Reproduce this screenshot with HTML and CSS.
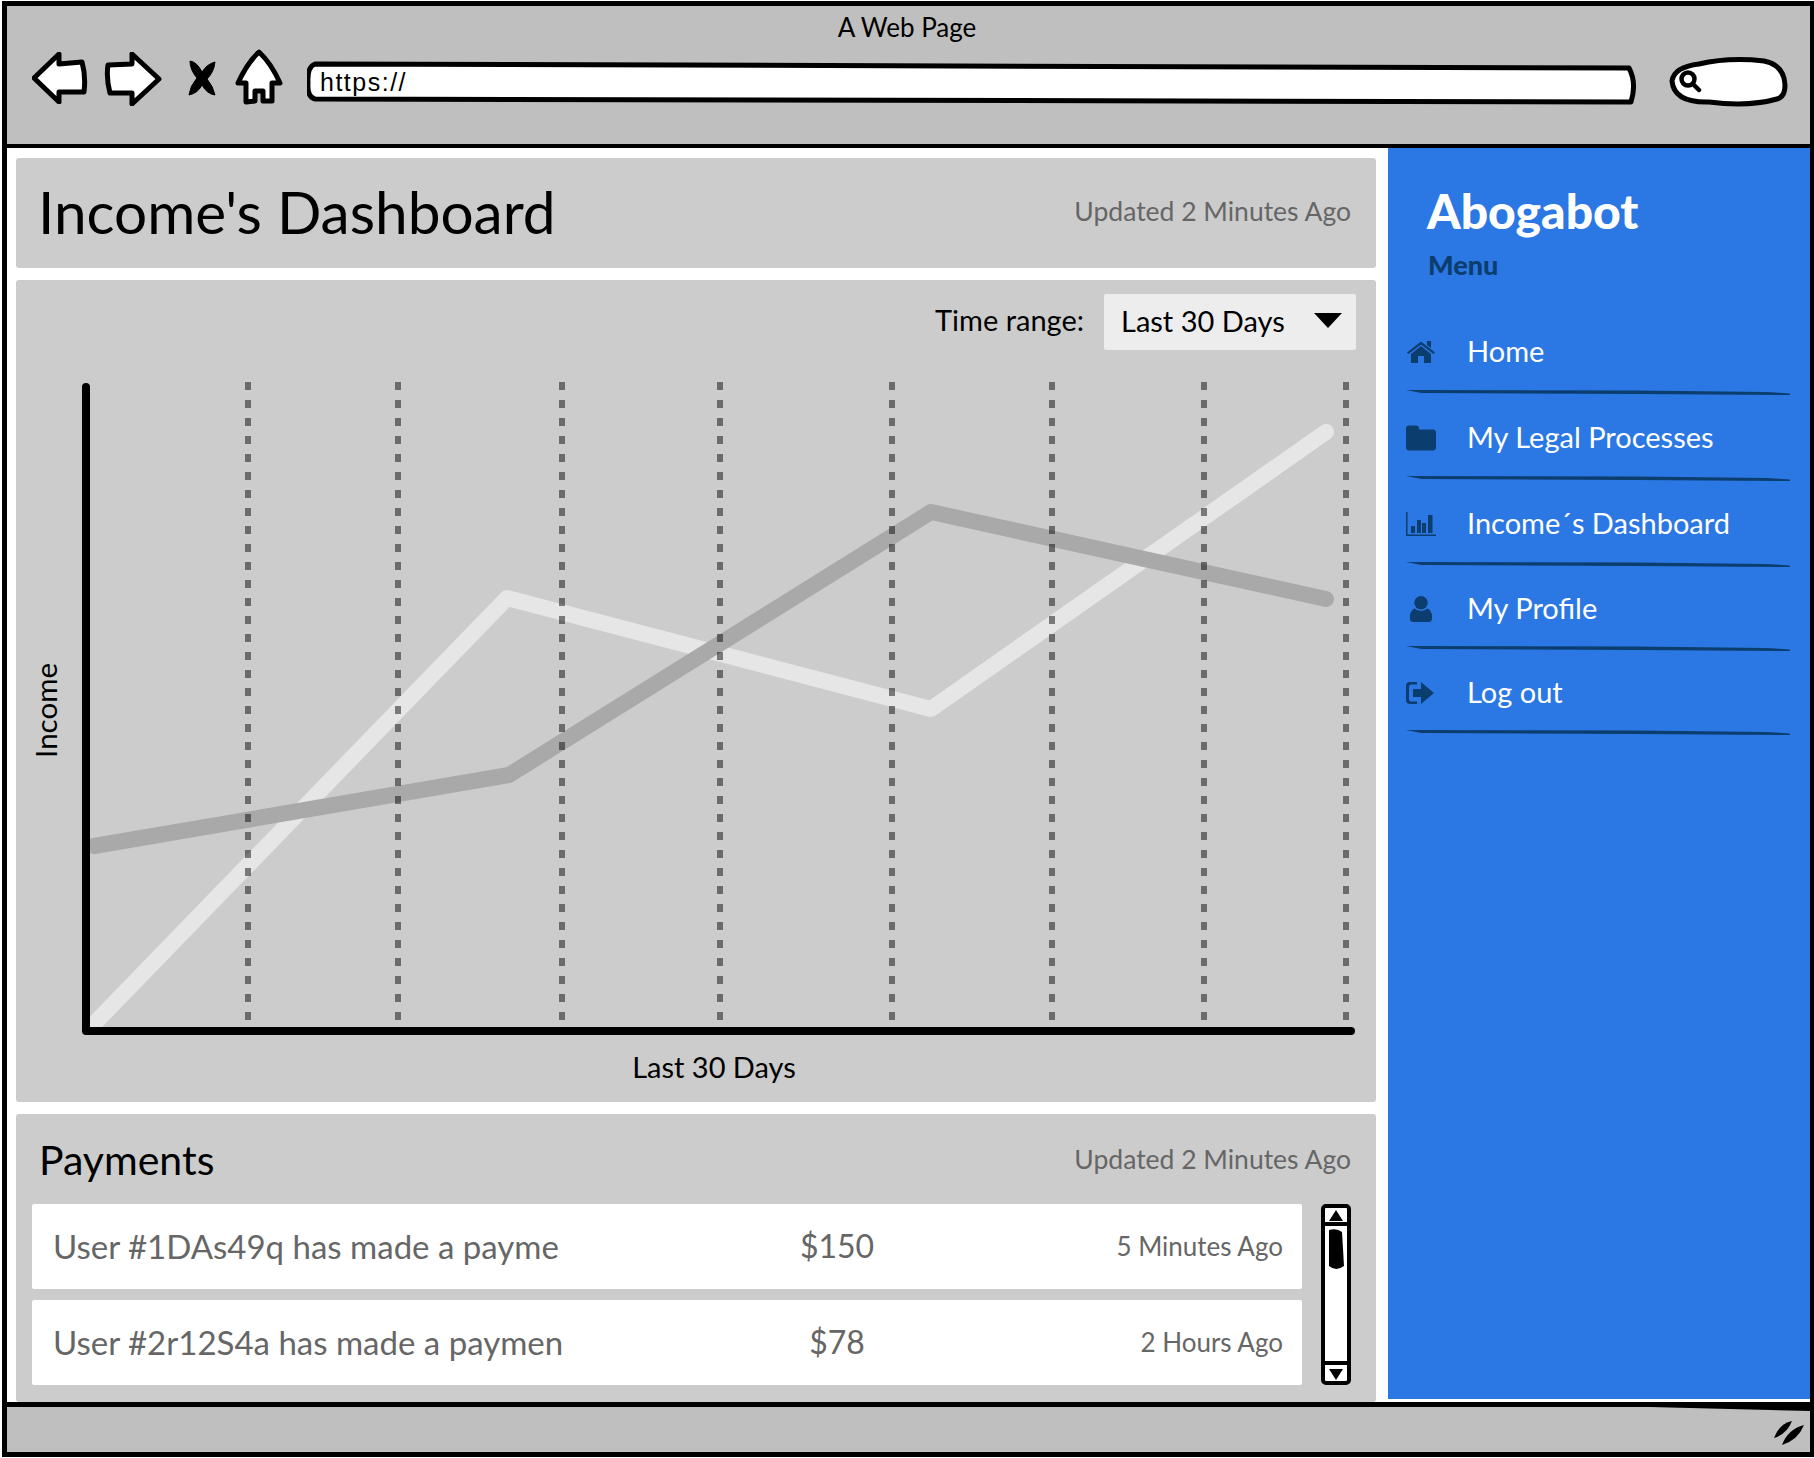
FILE: index.html
```html
<!DOCTYPE html>
<html lang="en">
<head>
  <meta charset="UTF-8" />
  <title>A Web Page</title>
  <link rel="stylesheet" href="styles.css">
</head>
<body>

<div class="window">

  <!-- Browser toolbar -->
  <header class="toolbar">
    <div class="window-title">A Web Page</div>
    <div class="controls">
      <svg class="ctl-back" viewBox="0 0 56 52"><path d="M2 26 L27 2 L27 12 L50 10 Q54 24 52 40 L27 40 L27 50 Z" /></svg>
      <svg class="ctl-forward" viewBox="0 0 58 54"><path d="M4 13 L28 12 L28 2 L55 27 L28 52 L28 41 L6 41 Q2 26 4 13 Z" /></svg>
      <svg class="ctl-stop" viewBox="0 0 28 36"><path d="M2 1 Q9 2 14 12 Q19 4 27 2 Q26 12 19 19 Q25 26 27 35 Q19 34 14 25 Q10 33 1 35 Q2 26 9 18 Q2 10 2 1 Z" /></svg>
      <svg class="ctl-home" viewBox="0 0 48 56"><path d="M24 3 Q36 14 45 34 L37 34 L37 52 L28 52 L28 42 L20 42 L20 52 L11 53 L11 34 L3 34 Q12 14 24 3 Z" /></svg>
      <div class="url-bar">
        <svg class="box-outline" viewBox="0 0 1331 44"><path d="M8 3 L1322 7 Q1330 22 1324 41 L8 38 Q0 36 1 22 Q0 6 8 3 Z" /></svg>
        <span class="url-text">https://</span>
      </div>
      <div class="search-box">
        <svg class="box-outline" viewBox="0 0 120 50"><path d="M30 7 Q60 0 95 4 Q115 8 116 28 Q116 40 108 42 Q80 50 40 45 Q5 46 3 24 Q5 10 30 7 Z" /></svg>
        <svg class="search-icon" viewBox="0 0 24 24"><circle cx="10" cy="10" r="6.5" /><path d="M15 15 L21 21" /></svg>
      </div>
    </div>
  </header>

  <div class="content">
    <main class="main">

      <section class="panel title-panel">
        <h1>Income's Dashboard</h1>
        <span class="updated">Updated 2 Minutes Ago</span>
      </section>

      <!-- Chart -->
      <section class="panel chart-panel">
        <div class="range-row">
          <label>Time range:</label>
          <div class="select">Last 30 Days <span class="caret"></span></div>
        </div>
        <div class="chart">
          <div class="y-label">Income</div>
          <svg class="plot" viewBox="76 376 1284 664">
            <polyline class="series-light" points="92,1026 507,598 931,709 1326,432" />
            <polyline class="series-dark" points="94,846 509,775 931,512 1326,599" />
            <g class="grid-lines">
              <path d="M248 382V1030" />
              <path d="M398 382V1030" />
              <path d="M562 382V1030" />
              <path d="M720 382V1030" />
              <path d="M892 382V1030" />
              <path d="M1052 382V1030" />
              <path d="M1204 382V1030" />
              <path d="M1346 382V1030" />
            </g>
            <path class="axes" d="M86 387 V1031 H1351" />
          </svg>
        </div>
        <div class="x-label">Last 30 Days</div>
      </section>

      <!-- Payments -->
      <section class="panel payments-panel">
        <div class="payments-head">
          <h2>Payments</h2>
          <span class="updated">Updated 2 Minutes Ago</span>
        </div>
        <div class="payments-body">
          <ul class="rows">
            <li class="row">
              <span class="row-text">User #1DAs49q has made a payme</span>
              <span class="row-amount">$150</span>
              <span class="row-time">5 Minutes Ago</span>
            </li>
            <li class="row">
              <span class="row-text">User #2r12S4a has made a paymen</span>
              <span class="row-amount">$78</span>
              <span class="row-time">2 Hours Ago</span>
            </li>
          </ul>
          <svg class="scrollbar" viewBox="0 0 30 181">
            <rect class="sb-frame" x="2" y="2" width="26" height="177" rx="3" />
            <path class="sb-line" d="M2 20H28M2 159H28" />
            <path class="sb-fill" d="M15 6 L22 17 L8 17 Z" />
            <path class="sb-fill" d="M8 165 L22 165 L15 176 Z" />
            <path class="sb-fill" d="M8 26 Q16 24 21 28 L23 62 Q15 68 8 62 Z" />
          </svg>
        </div>
      </section>

    </main>

    <!-- Sidebar -->
    <aside class="sidebar">
      <div class="brand">Abogabot</div>
      <div class="menu-label">Menu</div>
      <ul class="nav">
        <li class="nav-item">
          <svg class="nav-icon" viewBox="0 0 30 24"><path d="M5 14 L15 6 L25 14 V23 H18 V16 H12 V23 H5 Z" /><path d="M1 12.5 L15 1.5 L29 12.5 L27.5 14 L15 4.5 L2.5 14 Z" /><path d="M21 1 H25 V8 L21 5 Z" /></svg>
          Home
        </li>
        <li class="nav-item">
          <svg class="nav-icon" viewBox="0 0 30 25"><path d="M3 0 H10 a3 3 0 0 1 3 3 V4 H27 a3 3 0 0 1 3 3 V22 a3 3 0 0 1 -3 3 H3 a3 3 0 0 1 -3 -3 V3 a3 3 0 0 1 3 -3 Z" /></svg>
          My Legal Processes
        </li>
        <li class="nav-item">
          <svg class="nav-icon" viewBox="0 0 30 24"><path d="M0 0 H1.5 V22.5 H30 V24 H0 Z" /><rect x="5" y="14" width="4" height="7" /><rect x="11" y="8" width="4" height="13" /><rect x="16" y="11" width="4" height="10" /><rect x="22" y="3" width="4.5" height="18" /></svg>
          Income´s Dashboard
        </li>
        <li class="nav-item short">
          <svg class="nav-icon" viewBox="0 0 30 27"><circle cx="15" cy="7" r="7" /><path d="M8 13 Q15 18 22 13 Q26 15 26.500 21 V24 Q26 27 23 27 H7 Q4 27 3.500 24 V21 Q4 15 8 13 Z" /></svg>
          My Profile
        </li>
        <li class="nav-item short">
          <svg class="nav-icon" viewBox="0 0 30 24"><path d="M4 1 H11 V3.500 H5 Q3 3.500 3 6 V18 Q3 20.500 5 20.500 H11 V23 H4 Q0 23 0 19 V5 Q0 1 4 1 Z" /><path d="M7 8 H15 V1 L28 12 L15 23 V16 H7 Z" /></svg>
          Log out
        </li>
      </ul>
    </aside>
  </div>

  <!-- Status bar -->
  <footer class="statusbar">
    <svg class="grip" viewBox="0 0 30 26"><path d="M0 18 Q5 4 18 1 Q13 14 0 18 Z" /><path d="M8 25 Q14 9 30 5 Q24 20 8 25 Z" /></svg>
  </footer>

</div>

</body>
</html>
```

FILE: styles.css
```css
* {
  box-sizing: border-box;
}

body {
  margin: 0;
  background: #fff;
  font-family: Lato, sans-serif;
  color: #000;
}

h1, h2, ul {
  margin: 0;
  padding: 0;
}

ul {
  list-style: none;
}

.window {
  width: 1812px;
  height: 1456px;
  margin: 1px 0 0 2px;
  border: 5px solid #000;
  border-right-width: 4px;
  display: flex;
  flex-direction: column;
}

/* toolbar */
.toolbar {
  height: 142px;
  flex-shrink: 0;
  background: #bfbfbf;
  border-bottom: 4px solid #000;
}

.window-title {
  padding-top: 5px;
  text-align: center;
  font-size: 26px;
  line-height: 32px;
  margin-right: 3px;
}

.controls {
  display: flex;
  align-items: flex-start;
  padding: 7px 0 0 25px;
}

.controls svg path {
  fill: #fff;
  stroke: #000;
  stroke-width: 5;
  stroke-linejoin: round;
}

.ctl-back {
  width: 56px;
  height: 52px;
  margin-top: 2px;
}

.ctl-forward {
  width: 58px;
  height: 54px;
  margin: 2px 0 0 16px;
}

.ctl-stop {
  width: 28px;
  height: 36px;
  margin: 10px 0 0 26px;
}

.controls .ctl-stop path {
  fill: #000;
  stroke-width: 1;
}

.ctl-home {
  width: 48px;
  height: 56px;
  margin: -1px 0 0 19px;
}

.url-bar {
  position: relative;
  width: 1331px;
  height: 44px;
  margin: 11px 0 0 24px;
  padding: 6px 0 0 13px;
  font-family: "Liberation Sans", sans-serif;
  font-size: 25px;
  line-height: 30px;
  letter-spacing: 1.500px;
}

.box-outline {
  position: absolute;
  left: 0;
  top: 0;
  width: 100%;
  height: 100%;
}

.url-text {
  position: relative;
}

.search-box {
  position: relative;
  width: 120px;
  height: 50px;
  margin: 7px 0 0 31px;
  padding: 12px 0 0 9px;
}

.search-icon {
  position: relative;
  display: block;
  width: 24px;
  height: 24px;
}

.controls .search-icon circle {
  fill: none;
  stroke: #000;
  stroke-width: 4.500;
}

.controls .search-icon path {
  stroke-width: 4.500;
  stroke-linecap: round;
}

/* content */
.content {
  flex: 1;
  min-height: 0;
  display: flex;
  gap: 12px;
  padding-left: 9px;
}

.main {
  width: 1360px;
  flex-shrink: 0;
  padding-top: 10px;
  display: flex;
  flex-direction: column;
  gap: 12px;
}

.panel {
  flex-shrink: 0;
  background: #cccccc;
  border-radius: 3px;
}

.title-panel {
  height: 110px;
  display: flex;
  align-items: center;
  justify-content: space-between;
  padding: 0 25px 5px 22px;
}

h1 {
  font-weight: 400;
  font-size: 58.500px;
}

.updated {
  font-size: 26.500px;
  color: #666;
}

/* chart */
.chart-panel {
  height: 822px;
  padding-top: 14px;
}

.range-row {
  display: flex;
  justify-content: flex-end;
  align-items: center;
  gap: 20px;
  height: 56px;
  padding-right: 20px;
}

.range-row label {
  font-size: 29px;
  margin-top: -6px;
}

.select {
  width: 252px;
  height: 56px;
  padding: 0 14px 3px 17px;
  display: flex;
  align-items: center;
  justify-content: space-between;
  background: #ededed;
  border-radius: 2px;
  font-size: 29px;
}

.caret {
  width: 0;
  height: 0;
  border-left: 14px solid transparent;
  border-right: 14px solid transparent;
  border-top: 15px solid #000;
}

.chart {
  display: flex;
  margin-top: 26px;
}

.y-label {
  width: 60px;
  flex-shrink: 0;
  align-self: center;
  margin-top: 5px;
  writing-mode: vertical-rl;
  transform: rotate(180deg);
  font-size: 29.500px;
  line-height: 60px;
  text-align: center;
}

.plot {
  display: block;
  width: 1284px;
  height: 664px;
  flex-shrink: 0;
}

.grid-lines path {
  stroke: #000;
  stroke-opacity: 0.475;
  stroke-width: 6;
  stroke-dasharray: 8 10;
  fill: none;
}

.series-light,
.series-dark {
  fill: none;
  stroke-width: 16;
  stroke-linecap: round;
  stroke-linejoin: round;
}

.series-light {
  stroke: #e6e6e6;
}

.series-dark {
  stroke: #a9a9a9;
}

.axes {
  fill: none;
  stroke: #000;
  stroke-width: 8;
  stroke-linecap: round;
  stroke-linejoin: round;
}

.x-label {
  margin-top: 9px;
  padding-left: 36px;
  text-align: center;
  font-size: 29px;
}

/* payments */
.payments-panel {
  flex: 1;
  padding: 0 25px 0 16px;
}

.payments-head {
  height: 90px;
  display: flex;
  align-items: center;
  justify-content: space-between;
  padding-left: 7px;
}

h2 {
  font-weight: 400;
  font-size: 41px;
}

.payments-body {
  display: flex;
  gap: 19px;
}

.rows {
  width: 1270px;
  display: flex;
  flex-direction: column;
  gap: 11px;
}

.row {
  height: 85px;
  padding: 0 19px 2px 21px;
  background: #fff;
  border-radius: 2px;
  display: grid;
  grid-template-columns: 724px 120px 1fr;
  align-items: center;
  color: #666;
}

.row-text {
  font-size: 33px;
  white-space: nowrap;
}

.row-amount {
  font-size: 32px;
  text-align: center;
}

.row-time {
  font-size: 26px;
  text-align: right;
}

.scrollbar {
  width: 30px;
  height: 181px;
  flex-shrink: 0;
}

.sb-frame {
  fill: #fff;
  stroke: #000;
  stroke-width: 4;
}

.sb-line {
  fill: none;
  stroke: #000;
  stroke-width: 4;
}

.sb-fill {
  fill: #000;
}

/* sidebar */
.sidebar {
  flex: 1;
  background: #2b78e4;
  padding: 35px 20px 0 18px;
  height: 1251px;
}

.brand {
  padding-left: 21px;
  font-size: 48px;
  font-weight: 900;
  line-height: 56px;
  color: #fff;
}

.menu-label {
  padding-left: 22px;
  margin-top: 8px;
  font-size: 27px;
  font-weight: 900;
  line-height: 36px;
  color: #0b3d6f;
}

.nav {
  margin-top: 26px;
}

.nav-item {
  height: 86px;
  position: relative;
  display: flex;
  align-items: center;
  gap: 31px;
  padding-bottom: 4px;
  font-size: 29px;
  color: #fff;
}

.nav-item.short {
  height: 84px;
}

/* tapered hand-drawn divider */
.nav-item::after {
  content: "";
  position: absolute;
  left: 0;
  right: 0;
  bottom: 0;
  height: 5px;
  background: #0b3d6f;
  clip-path: polygon(0 0, 60% 10%, 94% 40%, 100% 70%, 100% 100%, 60% 80%, 4% 60%);
}

.nav-icon {
  width: 30px;
  height: 26px;
  margin-top: 4px;
  flex-shrink: 0;
  fill: #0b3d6f;
}

/* status bar */
.statusbar {
  position: relative;
  height: 50px;
  flex-shrink: 0;
  background: #bfbfbf;
  border-top: 5px solid #000;
  display: flex;
  justify-content: flex-end;
  align-items: center;
  padding: 6px 6px 0 0;
}

/* the top line thickens toward the right corner */
.statusbar::before {
  content: "";
  position: absolute;
  right: 0;
  top: 0;
  width: 160px;
  height: 4px;
  background: #000;
  clip-path: polygon(0 0, 100% 0, 100% 100%);
}

.grip {
  width: 30px;
  height: 26px;
  fill: #000;
}
```
